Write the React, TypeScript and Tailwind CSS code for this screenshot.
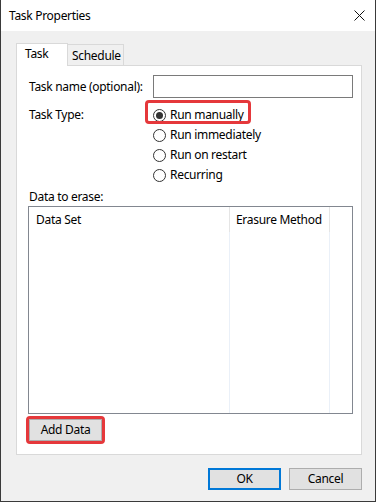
import React from "react";

const font = { fontFamily: '"Noto Sans", "Segoe UI", sans-serif', letterSpacing: "-0.3px" };

function Radio({ checked, label }: { checked?: boolean; label: string }) {
  return (
    <div className="flex items-center h-[20px]">
      <span className="w-[13px] h-[13px] rounded-full border border-[#333333] bg-white flex items-center justify-center">
        {checked && <span className="w-[7px] h-[7px] rounded-full bg-[#333333]" />}
      </span>
      <span className="ml-[4px] text-[12px] leading-[14px] text-black">{label}</span>
    </div>
  );
}

export default function App() {
  return (
    <div
      className="w-[376px] h-[502px] flex flex-col bg-[#f0f0f0] border-l border-r border-b border-[#3a3a3a] text-black"
      style={font}
    >
      {/* Title bar */}
      <div className="h-[31px] bg-white flex items-center justify-between pl-[8px] pr-[9px]">
        <span className="text-[12px] leading-[14px] text-black">Task Properties</span>
        <svg width="11" height="11" viewBox="0 0 11 11" className="mr-[1px]">
          <path d="M0.5 0.5 L10.5 10.5 M10.5 0.5 L0.5 10.5" stroke="#111" strokeWidth="1" fill="none" />
        </svg>
      </div>

      {/* Body */}
      <div className="flex-1 flex flex-col pt-[12px] pl-[15px] pr-[13px]">
        {/* Tabs */}
        <div className="flex items-end h-[22px] relative z-10">
          <div className="w-[52px] h-[23px] bg-white border border-b-0 border-[#d9d9d9] pl-[8px] pt-[3px] text-[12px] leading-[14px] -mb-[1px]">
            Task
          </div>
          <div className="w-[56px] h-[21px] bg-[#f0f0f0] border border-l-0 border-b-0 border-[#d9d9d9] pl-[4px] pt-[4px] text-[12px] leading-[14px]">
            Schedule
          </div>
        </div>

        {/* Panel */}
        <div className="w-[346px] h-[390px] bg-white border border-[#d9d9d9] flex flex-col pt-[9px] pl-[12px]">
          {/* Task name row */}
          <div className="flex items-center h-[23px]">
            <span className="w-[124px] text-[12px] leading-[14px]">Task name (optional):</span>
            <div className="w-[200px] h-[23px] border border-[#7a7a7a] bg-white" />
          </div>

          {/* Task type */}
          <div className="flex mt-[7px]">
            <span className="w-[124px] h-[20px] flex items-center text-[12px] leading-[14px]">Task Type:</span>
            <div className="flex flex-col">
              <div className="relative">
                <span className="absolute left-[-8px] top-[-5px] w-[106px] h-[24px] border-[3px] border-[#e5383b] rounded-[4px]" />
                <Radio checked label="Run manually" />
              </div>
              <Radio label="Run immediately" />
              <Radio label="Run on restart" />
              <Radio label="Recurring" />
            </div>
          </div>

          {/* Data to erase */}
          <div className="mt-[4px] h-[16px] flex items-center text-[12px] leading-[14px]">Data to erase:</div>
          <div className="mt-[1px] -ml-[1px] w-[325px] h-[208px] border border-[#828790] bg-white flex">
            <div className="w-[201px] flex flex-col">
              <div className="h-[25px] flex items-center pl-[7px] border-r border-[#e5e5e5] text-[12px] leading-[14px]">
                Data Set
              </div>
              <div className="flex-1 border-r border-[#eaf0f8]" />
            </div>
            <div className="w-[100px] flex flex-col">
              <div className="h-[25px] flex items-center pl-[6px] border-r border-[#e5e5e5] text-[12px] leading-[14px]">
                Erasure Method
              </div>
              <div className="flex-1 border-r border-[#eaf0f8]" />
            </div>
          </div>

          {/* Add Data */}
          <div className="mt-[2px] -ml-[3px] w-[79px] h-[28px] border-[3px] border-[#e5383b] rounded-[4px] flex">
            <div className="flex-1 bg-[#e1e1e1] border border-[#adadad] flex items-center justify-center text-[12px] leading-[14px]">
              Add Data
            </div>
          </div>
        </div>

        {/* Bottom buttons */}
        <div className="flex justify-end mt-[13px] gap-[8px]">
          <div className="w-[73px] h-[22px] bg-[#e1e1e1] border-2 border-[#0078d7] flex items-center justify-center text-[12px] leading-[14px]">
            OK
          </div>
          <div className="w-[73px] h-[22px] bg-[#e1e1e1] border border-[#adadad] flex items-center justify-center text-[12px] leading-[14px]">
            Cancel
          </div>
        </div>
      </div>
    </div>
  );
}
